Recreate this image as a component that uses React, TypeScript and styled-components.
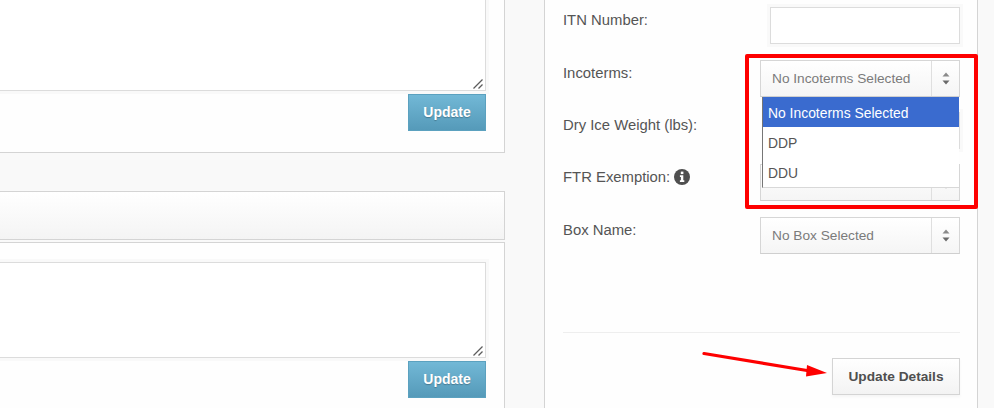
import { createGlobalStyle, styled } from "styled-components";

const GlobalStyle = createGlobalStyle`
  html, body {
    margin: 0;
    padding: 0;
    background: #f9f9f9;
    font-family: "Liberation Sans", Arial, sans-serif;
  }
`;

const Page = styled.div`
  position: relative;
  display: flex;
  width: 994px;
  height: 408px;
  overflow: hidden;
  background: #f9f9f9;
`;

const LeftColumn = styled.div`
  width: 505px;
  flex: none;
  display: flex;
  flex-direction: column;
`;

const NotePanel = styled.div<{ $height: number; $top?: boolean }>`
  box-sizing: border-box;
  height: ${(props) => props.$height}px;
  flex: none;
  display: flex;
  flex-direction: column;
  align-items: flex-end;
  gap: 3px;
  padding: ${(props) => (props.$top ? "0 18px 0 0" : "19px 18px 0 0")};
  background: #fefefe;
  border-right: 1px solid #d4d4d4;
  border-bottom: 1px solid #d4d4d4;
  border-top: ${(props) => (props.$top ? "none" : "1px solid #d4d4d4")};
`;

const NoteWrap = styled.div`
  position: relative;
  flex: none;
`;

const NoteArea = styled.textarea<{ $height: number; $top?: boolean }>`
  box-sizing: border-box;
  display: block;
  width: 560px;
  height: ${(props) => props.$height}px;
  margin: 0;
  padding: 0;
  background: #fff;
  border: 1px solid #dcdcdc;
  border-top: ${(props) => (props.$top ? "none" : "1px solid #dcdcdc")};
  border-radius: 0;
  outline: none;
  resize: none;
  box-shadow: 0 0 0 3px #f9f9f9;
`;

const GripIcon = styled.svg`
  position: absolute;
  right: 3px;
  bottom: 2px;
`;

const UpdateButton = styled.button`
  box-sizing: border-box;
  width: 78px;
  height: 37px;
  flex: none;
  padding: 0 0 2px;
  color: #fff;
  font-family: "Liberation Sans", Arial, sans-serif;
  font-size: 14px;
  font-weight: 700;
  text-shadow: 0 1px 1px rgba(0, 0, 0, 0.25);
  background: linear-gradient(#72b8d6, #559ab9);
  border: 1px solid #5ba1bf;
  border-radius: 0;
`;

const SectionHeader = styled.div`
  box-sizing: border-box;
  height: 49px;
  flex: none;
  margin: 38px 0 2px;
  background: linear-gradient(#ffffff, #f4f4f4);
  border: 1px solid #d4d4d4;
  border-left: none;
`;

const DetailsPanel = styled.div`
  box-sizing: border-box;
  width: 434px;
  height: 408px;
  flex: none;
  margin-left: 39px;
  padding: 7px 17px 0 18px;
  background: #fefefe;
  border-left: 1px solid #d4d4d4;
  border-right: 1px solid #d4d4d4;
`;

const FieldList = styled.div`
  display: flex;
  flex-direction: column;
  gap: 16px;
`;

const FieldRow = styled.div<{ $height?: number }>`
  display: flex;
  justify-content: space-between;
  align-items: flex-start;
  height: ${(props) => props.$height ?? 37}px;
`;

const FieldLabel = styled.label`
  display: flex;
  align-items: center;
  gap: 4px;
  padding-top: 4px;
  color: #555;
  font-size: 14.85px;
  line-height: 18px;
`;

const TextInput = styled.div`
  box-sizing: border-box;
  width: 190px;
  height: 37px;
  flex: none;
  background: #fff;
  border: 1px solid #dcdcdc;
  box-shadow: 0 0 0 3px #f9f9f9;
`;

const SelectBox = styled.div`
  position: relative;
  box-sizing: border-box;
  display: flex;
  width: 200px;
  height: 37px;
  flex: none;
  background: linear-gradient(#ffffff, #f5f5f5);
  border: 1px solid #d6d6d6;
  border-bottom-color: #cfcfcf;
`;

const SelectValue = styled.div`
  flex: 1;
  padding-left: 11px;
  color: #7b7b7b;
  font-size: 13.7px;
  line-height: 35px;
  white-space: nowrap;
`;

const SelectArrows = styled.div`
  width: 27px;
  flex: none;
  display: flex;
  align-items: center;
  justify-content: center;
  border-left: 1px solid #dfdfdf;
`;

const OptionList = styled.div`
  position: absolute;
  top: 36px;
  left: 1px;
  z-index: 2;
  box-sizing: border-box;
  width: 197px;
  height: 91px;
  background: #fff;
  border-left: 1px solid #767676;
  border-bottom: 1px solid #d8d8d8;
`;

const Option = styled.div<{ $selected?: boolean }>`
  height: 30px;
  padding-left: 5px;
  color: ${(props) => (props.$selected ? "#fff" : "#555")};
  background: ${(props) => (props.$selected ? "#3a6bcf" : "#fff")};
  font-size: 13.9px;
  line-height: 32px;
`;

const Divider = styled.div`
  height: 1px;
  margin-top: 78px;
  background: #eeeeee;
`;

const ActionRow = styled.div`
  display: flex;
  justify-content: flex-end;
  margin-top: 25px;
`;

const DetailsButton = styled.button`
  box-sizing: border-box;
  width: 128px;
  height: 37px;
  padding: 0;
  color: #4f4f4f;
  font-family: "Liberation Sans", Arial, sans-serif;
  font-size: 13.7px;
  font-weight: 700;
  background: linear-gradient(#ffffff, #f3f3f3);
  border: 1px solid #d4d4d4;
  border-radius: 0;
  box-shadow: 0 2px 3px rgba(0, 0, 0, 0.04);
`;

const Highlight = styled.div`
  position: absolute;
  left: 745px;
  top: 54px;
  z-index: 3;
  box-sizing: border-box;
  width: 233px;
  height: 155px;
  border: 4px solid #fe0000;
  border-radius: 2px;
`;

const ArrowOverlay = styled.svg`
  position: absolute;
  left: 695px;
  top: 345px;
  z-index: 3;
`;

const Arrows = () => (
  <svg width="8" height="13" viewBox="0 0 8 13">
    <path d="M4 0.5 L7.5 4.5 H0.5 Z" fill="#8a8a8a" />
    <path d="M4 12.5 L7.5 8.5 H0.5 Z" fill="#6a6a6a" />
  </svg>
);

const Grip = () => (
  <GripIcon width="10" height="10" viewBox="0 0 10 10">
    <path d="M0.5 9.5 L9.5 0.5" stroke="#5c5c5c" strokeWidth="1.3" />
    <path d="M5.5 9.5 L9.5 5.5" stroke="#5c5c5c" strokeWidth="1.3" />
  </GripIcon>
);

const InfoIcon = () => (
  <svg width="16" height="16" viewBox="0 0 16 16">
    <circle cx="8" cy="8" r="8" fill="#4f4f4f" />
    <rect x="6.8" y="2.6" width="2.6" height="2.5" fill="#fff" />
    <path d="M5.9 6.3 H9.3 V11.3 H10.3 V13 H5.9 V11.3 H6.9 V8 H5.9 Z" fill="#fff" />
  </svg>
);

const Select = ({ value, children }: { value: string; children?: React.ReactNode }) => (
  <SelectBox>
    <SelectValue>{value}</SelectValue>
    <SelectArrows>
      <Arrows />
    </SelectArrows>
    {children}
  </SelectBox>
);

export default function App() {
  return (
    <>
      <GlobalStyle />
      <Page>
        <LeftColumn>
          <NotePanel $height={153} $top>
            <NoteWrap>
              <NoteArea $height={91} $top readOnly />
              <Grip />
            </NoteWrap>
            <UpdateButton>Update</UpdateButton>
          </NotePanel>
          <SectionHeader />
          <NotePanel $height={170}>
            <NoteWrap>
              <NoteArea $height={96} readOnly />
              <Grip />
            </NoteWrap>
            <UpdateButton>Update</UpdateButton>
          </NotePanel>
        </LeftColumn>
        <DetailsPanel>
          <FieldList>
            <FieldRow>
              <FieldLabel>ITN Number:</FieldLabel>
              <TextInput />
            </FieldRow>
            <FieldRow $height={36}>
              <FieldLabel>Incoterms:</FieldLabel>
              <Select value="No Incoterms Selected">
                <OptionList>
                  <Option $selected>No Incoterms Selected</Option>
                  <Option>DDP</Option>
                  <Option>DDU</Option>
                </OptionList>
              </Select>
            </FieldRow>
            <FieldRow $height={36}>
              <FieldLabel>Dry Ice Weight (lbs):</FieldLabel>
              <TextInput />
            </FieldRow>
            <FieldRow>
              <FieldLabel>
                FTR Exemption: <InfoIcon />
              </FieldLabel>
              <Select value="" />
            </FieldRow>
            <FieldRow>
              <FieldLabel>Box Name:</FieldLabel>
              <Select value="No Box Selected" />
            </FieldRow>
          </FieldList>
          <Divider />
          <ActionRow>
            <DetailsButton>Update Details</DetailsButton>
          </ActionRow>
        </DetailsPanel>
        <Highlight />
        <ArrowOverlay width="140" height="40" viewBox="0 0 140 40">
          <path d="M9 8.5 L112 25.5" stroke="#fe0000" strokeWidth="3.2" strokeLinecap="round" fill="none" />
          <path d="M132 28 L112 20 L111 31.5 Z" fill="#fe0000" />
        </ArrowOverlay>
      </Page>
    </>
  );
}
